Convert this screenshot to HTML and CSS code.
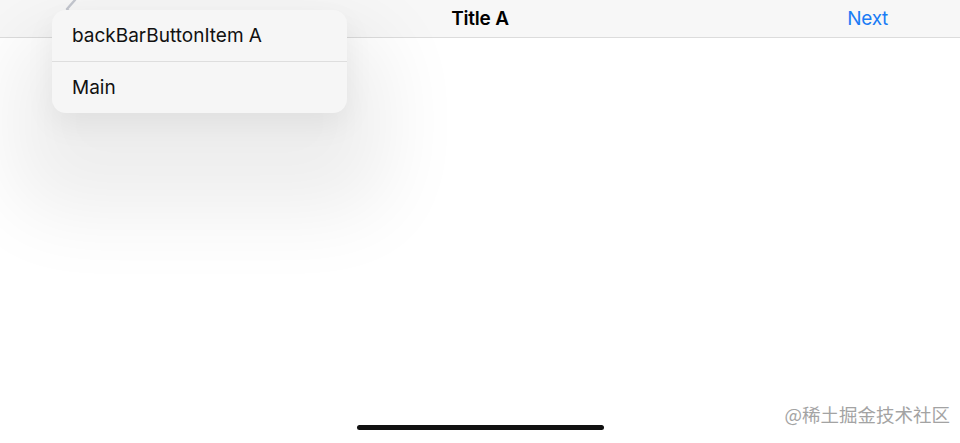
FILE: index.html
```html
<!DOCTYPE html>
<html>
<head>
<meta charset="utf-8">
<link rel="stylesheet" href="styles.css">
</head>
<body>
<div class="screen">
  <header class="navbar">
    <div class="nav-left">
      <svg class="back-chevron" width="14" height="22" viewBox="0 0 14 22"><path d="M11 2 L3 11 L11 20" fill="none" stroke="#c4c7cf" stroke-width="2.4" stroke-linecap="round" stroke-linejoin="round"/></svg>
    </div>
    <div class="nav-title">Title A</div>
    <div class="nav-right"><span class="nav-next">Next</span></div>
  </header>
  <main class="content"></main>
  <footer class="home-area"><div class="home-indicator"></div></footer>

  <div class="menu">
    <div class="menu-item">backBarButtonItem A</div>
    <div class="menu-item">Main</div>
  </div>
  <div class="watermark">@稀土掘金技术社区</div>
</div>
</body>
</html>
```
FILE: styles.css
```css
* { box-sizing: border-box; }
html, body { margin: 0; padding: 0; background: #fff; }
body { font-family: Inter, "Noto Sans", "Liberation Sans", sans-serif; }
.screen {
  position: relative;
  width: 960px;
  height: 443px;
  overflow: hidden;
  display: flex;
  flex-direction: column;
  background: #fff;
}
.navbar {
  height: 38px;
  flex: 0 0 38px;
  background: #f7f7f7;
  border-bottom: 1px solid #dcdcdc;
  display: grid;
  grid-template-columns: 1fr auto 1fr;
  align-items: center;
}
.nav-left { padding-left: 64px; display: flex; align-items: center; }
.back-chevron { margin-top: -20px; }
.nav-title {
  font-size: 19px;
  font-weight: 600;
  color: #000;
  letter-spacing: -0.2px;
}
.nav-right { display: flex; justify-content: flex-end; padding-right: 72px; }
.nav-next { font-size: 19px; color: #1a7cf5; letter-spacing: -0.3px; }
.content { flex: 1; }
.home-area {
  height: 23px;
  flex: 0 0 23px;
  display: flex;
  justify-content: center;
  padding-top: 5px;
}
.home-indicator {
  width: 247px;
  height: 5px;
  border-radius: 3px;
  background: #111;
}
.menu {
  position: absolute;
  left: 52px;
  top: 10px;
  width: 295px;
  background: #f6f6f6;
  border-radius: 14px;
  box-shadow: 0 60px 80px 40px rgba(0,0,0,0.07), 0 12px 30px rgba(0,0,0,0.06);
  overflow: hidden;
}
.menu-item {
  height: 51px;
  display: flex;
  align-items: center;
  padding-left: 20px;
  font-size: 19px;
  color: #111;
  letter-spacing: 0;
}
.menu-item + .menu-item { border-top: 1px solid #dedede; height: 52px; }
.watermark {
  position: absolute;
  right: 10px;
  top: 401px;
  font-family: "Noto Sans CJK SC", sans-serif;
  font-size: 18.5px;
  color: #9a9a9a;
  opacity: 0.9;
}
```
